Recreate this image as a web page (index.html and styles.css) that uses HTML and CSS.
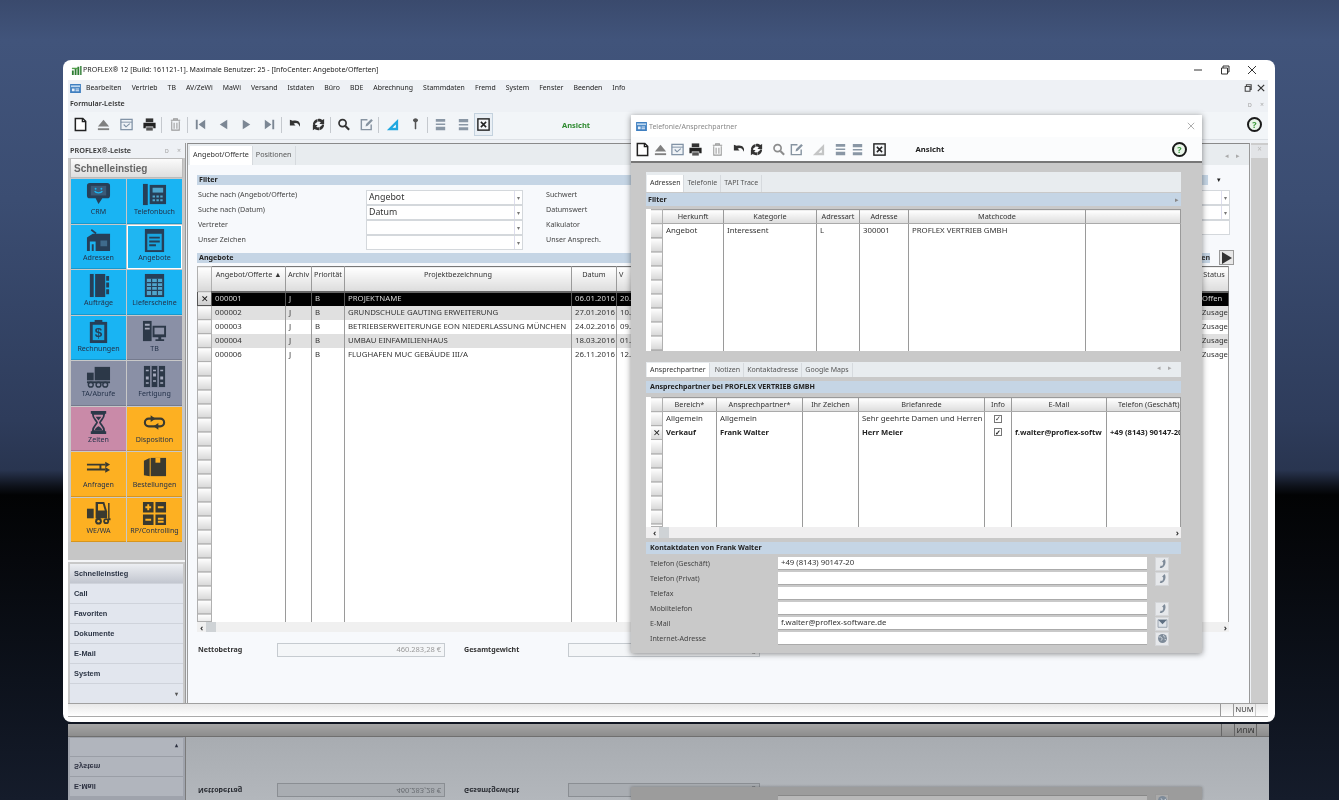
FILE: index.html
```html
<!DOCTYPE html>
<html lang="de">
<head>
<meta charset="utf-8">
<title>PROFLEX 12</title>
<link rel="stylesheet" href="styles.css">
</head>
<body>
<svg class="defs" width="0" height="0" aria-hidden="true">
  <defs>
    <symbol id="t-new" viewBox="0 0 16 16"><path d="M2.500 1.500h8l3 3v10h-11z" fill="#fff" stroke="#222" stroke-width="1.600"/><path d="M10 2v3h3.500" fill="none" stroke="#222" stroke-width="1.400"/></symbol>
    <symbol id="t-eject" viewBox="0 0 16 16"><path d="M8 3l6 7H2z" fill="#808080"/><path d="M2 12h12v2H2z" fill="#808080"/></symbol>
    <symbol id="t-check" viewBox="0 0 16 16"><rect x="2" y="2.500" width="12" height="11" fill="#eef2f6" stroke="#7d8fa3" stroke-width="1.300"/><path d="M2 5.500h12" stroke="#7d8fa3"/><path d="M5 8l2.500 2.500L11.500 7" fill="none" stroke="#7d8fa3" stroke-width="1.200"/></symbol>
    <symbol id="t-print" viewBox="0 0 16 16"><path d="M4 1.500h8v4H4z" fill="#333"/><path d="M1.500 6h13v6h-2.500v-2H4v2H1.500z" fill="#222"/><path d="M4.500 11h7v3.500h-7z" fill="#555"/></symbol>
    <symbol id="t-trash" viewBox="0 0 16 16"><path d="M3 3.500h10M6 3.500V2h4v1.500M4 4.500V14h8V4.500M6.500 6v6.500M9.500 6v6.500" fill="none" stroke="#999" stroke-width="1.100"/></symbol>
    <symbol id="t-first" viewBox="0 0 16 16"><path d="M3 3h2v10H3zM13 3v10L6 8z" fill="#7c8794"/></symbol>
    <symbol id="t-prev" viewBox="0 0 16 16"><path d="M12 3v10L4 8z" fill="#7c8794"/></symbol>
    <symbol id="t-next" viewBox="0 0 16 16"><path d="M4 3v10l8-5z" fill="#7c8794"/></symbol>
    <symbol id="t-last" viewBox="0 0 16 16"><path d="M11 3h2v10h-2zM3 3v10l7-5z" fill="#7c8794"/></symbol>
    <symbol id="t-undo" viewBox="0 0 16 16"><path d="M2 3v6h6L6 7c3-1.500 5.500-.2 6.500 3.500 1.500-4.500-1.500-8-7.500-6.500z" fill="#333"/></symbol>
    <symbol id="t-sync" viewBox="0 0 16 16"><path d="M2 8c0-3 2-5.500 5-6v3L4.500 7v2.500zM14 2v5.500h-5l1.500-2c-1-.5-2-.7-3-.5V2c1.800-.2 3.500.3 4.500 1.200z" fill="#333"/><path d="M2 14V8.500h5L5.500 10.500c1 .6 2 .7 3 .5v3c-1.800.2-3.500-.3-4.500-1.200zM14 8c0 3-2 5.500-5 6v-3l2.500-2V8z" fill="#333"/></symbol>
    <symbol id="t-search" viewBox="0 0 16 16"><circle cx="7" cy="6.500" r="3.800" fill="none" stroke="#333" stroke-width="1.800"/><path d="M10 9.500l4 4" stroke="#333" stroke-width="2.200"/></symbol>
    <symbol id="t-edit" viewBox="0 0 16 16"><path d="M13 8v5.500H2.500V3H9" fill="none" stroke="#8794a1" stroke-width="1.500"/><path d="M7 10l.5-2.500L13 2l1.800 1.800L9.300 9.300z" fill="#8794a1"/></symbol>
    <symbol id="t-ruler" viewBox="0 0 16 16"><path d="M14 2v12H2z" fill="#20a8e0"/><path d="M11.500 8v3.500H8z" fill="#fff"/></symbol>
    <symbol id="t-pin" viewBox="0 0 16 16"><circle cx="8" cy="3.500" r="2.300" fill="#555"/><path d="M5.500 2.500h5v2h-5z" fill="#555"/><path d="M7.200 5h1.600v7l-.8 1.500-.8-1.500z" fill="#555"/></symbol>
    <symbol id="t-up" viewBox="0 0 16 16"><path d="M3 2h10v3H3zM3 7h10v1.500H3zM3 10.500h10V14H3z" fill="#8a97a5"/></symbol>
    <symbol id="t-down" viewBox="0 0 16 16"><path d="M3 2h10v3.500H3zM3 7.500h10V9H3zM3 11h10v3H3z" fill="#8a97a5"/></symbol>
    <symbol id="t-close" viewBox="0 0 16 16"><rect x="2" y="2" width="12" height="12" fill="#f4f6f8" stroke="#222" stroke-width="1.500"/><path d="M5.200 5.200l5.600 5.600M10.800 5.200l-5.600 5.600" stroke="#222" stroke-width="1.600"/></symbol>
    <symbol id="phone" viewBox="0 0 16 16"><path d="M11 1.500c2 2.500 2 7-.5 10s-5 3.500-6.500 2.500l1.500-3 1.800.6c1.500-1.400 2-3.400 1.600-5.400L7.300 5.500z" fill="#7e8b99"/></symbol>
    <symbol id="mail" viewBox="0 0 16 16"><path d="M1.500 2.500h13v11h-13z" fill="#dfe4ea" stroke="#7e8b99"/><path d="M2 3l6 6 6-6z" fill="#5e6f82"/></symbol>
    <symbol id="globe" viewBox="0 0 16 16"><circle cx="8" cy="8" r="6.500" fill="#7e8b99"/><path d="M3 6c2-1 3 0 4 1s0 3-1 4M10 2.500c-1 2 0 3 2 3.500M11 9c1 0 2 .5 2 1.500" fill="none" stroke="#dfe4ea" stroke-width="1.300"/></symbol>

    <symbol id="i-crm" viewBox="0 0 26 26"><path d="M4 1h18a3 3 0 0 1 3 3v10a3 3 0 0 1-3 3h-5l-4 6-3-6H4a3 3 0 0 1-3-3V4a3 3 0 0 1 3-3z" fill="#263f58"/><path d="M5 4h16v10H5z" fill="#3a5a78"/><path d="M9 9.500c1.500 2.500 6.500 2.500 8 0" fill="none" stroke="#1cb4f0" stroke-width="1.400"/><circle cx="10" cy="7" r="1" fill="#1cb4f0"/><circle cx="16" cy="7" r="1" fill="#1cb4f0"/></symbol>
    <symbol id="i-phone" viewBox="0 0 26 26"><path d="M1 2h5v22H1z" fill="#263f58"/><path d="M8 3h17v20H8z" fill="#263f58"/><path d="M11 6h11v5H11z" fill="#4fa5cc"/><path d="M11 14h2.500v2H11zM15 14h2.500v2H15zM19 14h2.500v2H19zM11 18h2.500v2H11zM15 18h2.500v2H15zM19 18h2.500v2H19z" fill="#4fa5cc"/></symbol>
    <symbol id="i-addr" viewBox="0 0 26 26"><path d="M6 1l5 4-1 1.500-5-4z" fill="#263f58"/><path d="M1 10l6-4h18v18H1z" fill="#263f58"/><path d="M4 14h6v10H8v-7H6v7H4z" fill="#1cb4f0"/><path d="M15 13h7v6h-7z" fill="#3f6b8c"/></symbol>
    <symbol id="i-doc" viewBox="0 0 26 26"><path d="M3 1h20v24H3z" fill="#263f58"/><path d="M5.500 6h15v17h-15z" fill="#18a5df"/><path d="M7.500 9h11v2h-11zM7.500 13h11v2h-11zM7.500 17h7v2h-7z" fill="#263f58"/></symbol>
    <symbol id="i-book" viewBox="0 0 26 26"><path d="M4 1h16v24H4z" fill="#263f58"/><path d="M21 3h3v5h-3zM21 10h3v5h-3zM21 17h3v5h-3z" fill="#263f58"/><path d="M8 1h1.500v24H8z" fill="#1cb4f0"/></symbol>
    <symbol id="i-table" viewBox="0 0 26 26"><path d="M3 1h20v24H3z" fill="#263f58"/><path d="M5 6h16v17H5z" fill="#4fa5cc"/><path d="M5 10h16M5 14h16M5 18h16M10 6v17M16 6v17" stroke="#263f58" stroke-width="1.200"/></symbol>
    <symbol id="i-bill" viewBox="0 0 26 26"><path d="M4 3h18v22H4z" fill="#263f58"/><path d="M9 1h8v4H9z" fill="#263f58"/><path d="M7 6h12v16H7z" fill="#18a5df"/><text x="13" y="19" text-anchor="middle" font-family="Liberation Sans, sans-serif" font-size="14" font-weight="700" fill="#263f58">$</text></symbol>
    <symbol id="i-pc" viewBox="0 0 26 26"><path d="M1 2h9v21H1z" fill="#2c3848"/><path d="M3 5h5v2H3zM3 9h5v2H3z" fill="#a5aabd"/><path d="M11 7h14v12h-5v2h3v2h-9v-2h3v-2h-6z" fill="#2c3848"/><path d="M13 9h10v7H13z" fill="#8d93a8"/></symbol>
    <symbol id="i-truck" viewBox="0 0 26 26"><path d="M9 3h16v14H9z" fill="#2c3848"/><path d="M1 9h7v8H1z" fill="#2c3848"/><path d="M1 18h24v2H1z" fill="#2c3848"/><circle cx="5" cy="21.500" r="2.500" fill="none" stroke="#2c3848" stroke-width="1.500"/><circle cx="13" cy="21.500" r="2.500" fill="none" stroke="#2c3848" stroke-width="1.500"/><circle cx="20" cy="21.500" r="2.500" fill="none" stroke="#2c3848" stroke-width="1.500"/></symbol>
    <symbol id="i-panel" viewBox="0 0 26 26"><path d="M2 2h22v22H2z" fill="#2c3848"/><path d="M8.500 2h1.500v22H8.500zM16 2h1.500v22H16z" fill="#8d93a8"/><path d="M4 6h3v1.500H4zM11.500 6h3v1.500h-3zM19 6h3v1.500h-3zM4 13h3v3H4zM11.500 10h3v3h-3zM19 13h3v3h-3zM4 19h3v1.500H4zM11.500 17h3v1.500h-3zM19 19h3v1.500h-3z" fill="#a5aabd"/></symbol>
    <symbol id="i-hour" viewBox="0 0 26 26"><path d="M5 1h16v3H5zM5 22h16v3H5z" fill="#2c3848"/><path d="M7 4h12c0 5-4 7-4.500 9 .5 2 4.500 4 4.500 9H7c0-5 4-7 4.500-9C11 11 7 9 7 4z" fill="none" stroke="#2c3848" stroke-width="1.800"/><path d="M10 7h6l-3 4zM9 21c1-2.500 3-3.500 4-4 1 .5 3 1.500 4 4z" fill="#2c3848"/></symbol>
    <symbol id="i-loop" viewBox="0 0 26 26"><path d="M9 9h10a4 4 0 0 1 0 8h-2M17 17H7a4 4 0 0 1 0-8h2" fill="none" stroke="#3a3a30" stroke-width="2.200"/><path d="M9 5.500l5 3.500-5 3.500zM17 13.500L12 17l5 3.500z" fill="#3a3a30"/></symbol>
    <symbol id="i-shuffle" viewBox="0 0 26 26"><path d="M1 10h9M1 15h9M10 10h10M10 15h10M15 10v5" fill="none" stroke="#3a3a30" stroke-width="2"/><path d="M20 7l5 3-5 3zM20 12.500l5 3-5 3z" fill="#3a3a30"/></symbol>
    <symbol id="i-box" viewBox="0 0 26 26"><path d="M2 6l6-3v19l-6-1z" fill="#3a3a30"/><path d="M9 3h16v19H9z" fill="#3a3a30"/><path d="M14 3h5v5h-5z" fill="#fdb022"/></symbol>
    <symbol id="i-fork" viewBox="0 0 26 26"><path d="M1 8h7v10H1z" fill="#3a3a30"/><path d="M10 1h9l3 10v7H10z" fill="#3a3a30"/><path d="M12.500 3h5l2 7h-7z" fill="#fdb022"/><path d="M23 2h1.500v16h1v2H23z" fill="#3a3a30"/><circle cx="13" cy="21" r="3.500" fill="#3a3a30"/><circle cx="21" cy="21" r="3" fill="#3a3a30"/><circle cx="13" cy="21" r="1.300" fill="#fdb022"/><circle cx="21" cy="21" r="1.200" fill="#fdb022"/></symbol>
    <symbol id="i-calc" viewBox="0 0 26 26"><path d="M1 1h11v11H1zM14 1h11v11H14zM1 14h11v11H1zM14 14h11v11H14z" fill="#3a3a30"/><path d="M5.500 3.500h2v2h2v2h-2v2h-2v-2h-2v-2h2zM16.500 5.500h6v2h-6zM3.500 18.500h6v2h-6zM16.500 17.500h6v2h-6zM16.500 20.500h6v2h-6z" fill="#fdb022"/></symbol>
  </defs>
</svg>

<main class="app">
  <header class="titlebar">
    <svg class="logo" viewBox="0 0 12 12" width="11" height="11"><path d="M1 6h2v5H1zM4 4h2v7H4zM7 2h2v9H7zM10 1h1.500v10H10z" fill="#2e7d32"/><path d="M1 3h7v1.500H1z" fill="#55a04f"/></svg>
    <span class="title-text">PROFLEX® 12 [Build: 161121-1]. Maximale Benutzer: 25 - [InfoCenter: Angebote/Offerten]</span>
    <div class="win-controls">
      <svg width="10" height="10" viewBox="0 0 10 10"><path d="M1 5h8" stroke="#333"/></svg>
      <svg width="10" height="10" viewBox="0 0 10 10"><path d="M1.500 3h6v6h-6zM3 3V1h6v6H7.500" fill="none" stroke="#333"/></svg>
      <svg width="10" height="10" viewBox="0 0 10 10"><path d="M1 1l8 8M9 1l-8 8" stroke="#333"/></svg>
    </div>
  </header>

  <nav class="menubar">
    <svg class="menu-icon" viewBox="0 0 12 10" width="11" height="9"><rect width="12" height="10" fill="#3f7fc0"/><path d="M1 1.500h10v2H1z" fill="#bcd7f0"/><path d="M2 5h3v3H2zM6 5h4v1H6zM6 7h4v1H6z" fill="#e6f0fa"/></svg>
    <span>Bearbeiten</span><span>Vertrieb</span><span>TB</span><span>AV/ZeWi</span><span>MaWi</span><span>Versand</span><span>Istdaten</span><span>Büro</span><span>BDE</span><span>Abrechnung</span><span>Stammdaten</span><span>Fremd</span><span>System</span><span>Fenster</span><span>Beenden</span><span>Info</span>
    <div class="menu-right">
      <svg width="8" height="8" viewBox="0 0 10 10"><path d="M1.500 3h6v6h-6zM3 3V1h6v6H7.500" fill="none" stroke="#444" stroke-width="1.300"/></svg>
      <svg width="8" height="8" viewBox="0 0 10 10"><path d="M1 1l8 8M9 1l-8 8" stroke="#333" stroke-width="1.500"/></svg>
    </div>
  </nav>

  <div class="formbar">
    <strong>Formular-Leiste</strong>
    <div class="dock-btns"><span>ᴅ</span><span>×</span></div>
  </div>

  <div class="toolbar">
    <svg class="ti"><use href="#t-new"/></svg>
    <svg class="ti"><use href="#t-eject"/></svg>
    <svg class="ti"><use href="#t-check"/></svg>
    <svg class="ti"><use href="#t-print"/></svg>
    <i class="sep"></i>
    <svg class="ti"><use href="#t-trash"/></svg>
    <i class="sep"></i>
    <svg class="ti"><use href="#t-first"/></svg>
    <svg class="ti"><use href="#t-prev"/></svg>
    <svg class="ti"><use href="#t-next"/></svg>
    <svg class="ti"><use href="#t-last"/></svg>
    <i class="sep"></i>
    <svg class="ti"><use href="#t-undo"/></svg>
    <svg class="ti"><use href="#t-sync"/></svg>
    <i class="sep"></i>
    <svg class="ti"><use href="#t-search"/></svg>
    <svg class="ti"><use href="#t-edit"/></svg>
    <i class="sep"></i>
    <svg class="ti"><use href="#t-ruler"/></svg>
    <svg class="ti"><use href="#t-pin"/></svg>
    <i class="sep"></i>
    <svg class="ti"><use href="#t-up"/></svg>
    <svg class="ti"><use href="#t-down"/></svg>
    <span class="ti-boxed"><svg class="ti"><use href="#t-close"/></svg></span>
    <span class="ansicht-green">Ansicht</span>
    <span class="help help-main">?</span>
  </div>

  <div class="workspace">
    <aside class="sidebar">
      <div class="side-head"><strong>PROFLEX®-Leiste</strong><span class="dock-btns"><span>ᴅ</span><span>×</span></span></div>
      <div class="side-title">Schnelleinstieg</div>
      <div class="tiles">
        <a class="tile cyan"><svg><use href="#i-crm"/></svg><span>CRM</span></a>
        <a class="tile cyan"><svg><use href="#i-phone"/></svg><span>Telefonbuch</span></a>
        <a class="tile cyan"><svg><use href="#i-addr"/></svg><span>Adressen</span></a>
        <a class="tile cyan active"><svg><use href="#i-doc"/></svg><span>Angebote</span></a>
        <a class="tile cyan"><svg><use href="#i-book"/></svg><span>Aufträge</span></a>
        <a class="tile cyan"><svg><use href="#i-table"/></svg><span>Lieferscheine</span></a>
        <a class="tile cyan"><svg><use href="#i-bill"/></svg><span>Rechnungen</span></a>
        <a class="tile slate"><svg><use href="#i-pc"/></svg><span>TB</span></a>
        <a class="tile slate"><svg><use href="#i-truck"/></svg><span>TA/Abrufe</span></a>
        <a class="tile slate"><svg><use href="#i-panel"/></svg><span>Fertigung</span></a>
        <a class="tile pink"><svg><use href="#i-hour"/></svg><span>Zeiten</span></a>
        <a class="tile amber"><svg><use href="#i-loop"/></svg><span>Disposition</span></a>
        <a class="tile amber"><svg><use href="#i-shuffle"/></svg><span>Anfragen</span></a>
        <a class="tile amber"><svg><use href="#i-box"/></svg><span>Bestellungen</span></a>
        <a class="tile amber"><svg><use href="#i-fork"/></svg><span>WE/WA</span></a>
        <a class="tile amber"><svg><use href="#i-calc"/></svg><span>RP/Controlling</span></a>
      </div>
      <div class="side-spacer"></div>
      <ul class="side-nav">
        <li class="current">Schnelleinstieg</li>
        <li>Call</li>
        <li>Favoriten</li>
        <li>Dokumente</li>
        <li>E-Mail</li>
        <li>System</li>
        <li class="more">▾</li>
      </ul>
    </aside>

    <section class="main-panel">
      <div class="tabs">
        <span class="tab on">Angebot/Offerte</span><span class="tab">Positionen</span>
        <span class="tab-arrows"><span>◂</span><span>▸</span></span>
      </div>
      <div class="panel-body">
        <div class="band-row">
          <div class="band">Filter</div>
          <span class="band-caret">▾</span>
        </div>
        <div class="filter-grid">
          <label>Suche nach (Angebot/Offerte)</label>
          <div class="combo"><span>Angebot</span><b>▾</b></div>
          <label>Suchwert</label>
          <div class="combo"><span></span><b>▾</b></div>
          <label>Suche nach (Datum)</label>
          <div class="combo"><span>Datum</span><b>▾</b></div>
          <label>Datumswert</label>
          <div class="combo"><span></span><b>▾</b></div>
          <label>Vertreter</label>
          <div class="combo"><span></span><b>▾</b></div>
          <label>Kalkulator</label>
          <div class="combo plain"><span></span></div>
          <label>Unser Zeichen</label>
          <div class="combo"><span></span><b>▾</b></div>
          <label>Unser Ansprech.</label>
          <div></div>
        </div>
        <div class="band-row second">
          <div class="band">Angebote</div>
          <span class="band-action">Optionen</span>
          <span class="play"><svg viewBox="0 0 10 12" width="10" height="12"><path d="M0 0l10 6-10 6z" fill="#333"/></svg></span>
        </div>
        <table class="grid main-grid">
          <colgroup><col class="w14"><col class="w74"><col class="w26"><col class="w33"><col class="w227"><col class="w45"><col><col class="w29"></colgroup>
          <thead>
            <tr><th class="rh"></th><th>Angebot/Offerte ▲</th><th>Archiv</th><th>Priorität</th><th>Projektbezeichnung</th><th>Datum</th><th class="left">V</th><th>Status</th></tr>
          </thead>
          <tbody>
            <tr class="sel"><td class="rh">✕</td><td>000001</td><td>J</td><td>B</td><td>PROJEKTNAME</td><td>06.01.2016</td><td>20.</td><td class="st">Offen</td></tr>
            <tr class="alt"><td class="rh"></td><td>000002</td><td>J</td><td>B</td><td>GRUNDSCHULE GAUTING ERWEITERUNG</td><td>27.01.2016</td><td>10.</td><td class="st">Zusage</td></tr>
            <tr><td class="rh"></td><td>000003</td><td>J</td><td>B</td><td>BETRIEBSERWEITERUNGE EON NIEDERLASSUNG MÜNCHEN</td><td>24.02.2016</td><td>09.</td><td class="st">Zusage</td></tr>
            <tr class="alt"><td class="rh"></td><td>000004</td><td>J</td><td>B</td><td>UMBAU EINFAMILIENHAUS</td><td>18.03.2016</td><td>01.</td><td class="st">Zusage</td></tr>
            <tr><td class="rh"></td><td>000006</td><td>J</td><td>B</td><td>FLUGHAFEN MUC GEBÄUDE III/A</td><td>26.11.2016</td><td>12.</td><td class="st">Zusage</td></tr>
            <tr class="fill"><td class="rh"></td><td></td><td></td><td></td><td></td><td></td><td></td><td></td></tr>
          </tbody>
        </table>
        <div class="hscroll"><span>‹</span><i></i><span class="end">›</span></div>
        <div class="totals">
          <strong>Nettobetrag</strong>
          <output class="total-a">460.283,28 €</output>
          <strong class="total-label">Gesamtgewicht</strong>
          <output class="total-b">1.250,00 kg</output>
        </div>
      </div>
    </section>

    <aside class="right-rail"><div class="rail-tab">×</div></aside>
  </div>

  <footer class="statusbar"><span class="cell"></span><span class="cell num">NUM</span><span class="cell last"></span></footer>

  <section class="modal">
    <div class="m-title">
      <svg viewBox="0 0 12 10" width="11" height="9"><rect width="12" height="10" fill="#3f7fc0"/><path d="M1 1.500h10v2H1z" fill="#bcd7f0"/><path d="M2 5h3v3H2zM6 5h4v1H6zM6 7h4v1H6z" fill="#e6f0fa"/></svg>
      <span>Telefonie/Ansprechpartner</span>
      <svg class="m-x" viewBox="0 0 10 10" width="8" height="8"><path d="M1 1l8 8M9 1l-8 8" stroke="#aaa" stroke-width="1.200"/></svg>
    </div>
    <div class="m-toolbar">
      <svg class="ti"><use href="#t-new"/></svg>
      <svg class="ti"><use href="#t-eject"/></svg>
      <svg class="ti"><use href="#t-check"/></svg>
      <svg class="ti"><use href="#t-print"/></svg>
      <svg class="ti mt-gap"><use href="#t-trash"/></svg>
      <svg class="ti mt-gap"><use href="#t-undo"/></svg>
      <svg class="ti"><use href="#t-sync"/></svg>
      <svg class="ti mt-gap faded"><use href="#t-search"/></svg>
      <svg class="ti"><use href="#t-edit"/></svg>
      <svg class="ti mt-gap faded-ruler"><use href="#t-ruler"/></svg>
      <svg class="ti mt-gap"><use href="#t-up"/></svg>
      <svg class="ti"><use href="#t-down"/></svg>
      <svg class="ti mt-gap"><use href="#t-close"/></svg>
      <strong class="m-ansicht">Ansicht</strong>
      <span class="help help-modal">?</span>
    </div>
    <div class="m-body">
      <div class="tabs m-tabs">
        <span class="tab on">Adressen</span><span class="tab">Telefonie</span><span class="tab">TAPI Trace</span>
      </div>
      <div class="band m-band">Filter<span class="band-end">▸</span></div>
      <table class="grid upper-grid">
        <colgroup><col class="w14"><col class="w61"><col class="w93"><col class="w43"><col class="w49"><col class="w177"><col></colgroup>
        <thead>
          <tr><th class="rh"></th><th>Herkunft</th><th>Kategorie</th><th>Adressart</th><th>Adresse</th><th>Matchcode</th><th></th></tr>
        </thead>
        <tbody>
          <tr><td class="rh"></td><td>Angebot</td><td>Interessent</td><td>L</td><td>300001</td><td>PROFLEX VERTRIEB GMBH</td><td></td></tr>
          <tr class="fill"><td class="rh"></td><td></td><td></td><td></td><td></td><td></td><td></td></tr>
        </tbody>
      </table>
      <div class="tabs m-tabs lower">
        <span class="tab on">Ansprechpartner</span><span class="tab">Notizen</span><span class="tab">Kontaktadresse</span><span class="tab">Google Maps</span>
        <span class="tab-arrows"><span>◂</span><span>▸</span></span>
      </div>
      <div class="band m-band2">Ansprechpartner bei PROFLEX VERTRIEB GMBH</div>
      <table class="grid lower-grid">
        <colgroup><col class="w14"><col class="w54"><col class="w86"><col class="w56"><col class="w126"><col class="w27"><col class="w95"><col></colgroup>
        <thead>
          <tr><th class="rh"></th><th>Bereich*</th><th>Ansprechpartner*</th><th>Ihr Zeichen</th><th>Briefanrede</th><th>Info</th><th>E-Mail</th><th class="clipped">Telefon (Geschäft)</th></tr>
        </thead>
        <tbody>
          <tr><td class="rh"></td><td>Allgemein</td><td>Allgemein</td><td></td><td>Sehr geehrte Damen und Herren</td><td class="ctr"><span class="cb">✓</span></td><td></td><td></td></tr>
          <tr class="bold"><td class="rh">✕</td><td>Verkauf</td><td>Frank Walter</td><td></td><td>Herr Meier</td><td class="ctr"><span class="cb">✓</span></td><td>f.walter@proflex-softw</td><td>+49 (8143) 90147-20</td></tr>
          <tr class="fill"><td class="rh"></td><td></td><td></td><td></td><td></td><td></td><td></td><td></td></tr>
        </tbody>
      </table>
      <div class="hscroll m-scroll"><span>‹</span><i></i><span class="end">›</span></div>
      <div class="band m-band3">Kontaktdaten von Frank Walter</div>
      <div class="contact">
        <label>Telefon (Geschäft)</label><div class="field">+49 (8143) 90147-20</div><span class="act"><svg><use href="#phone"/></svg></span>
        <label>Telefon (Privat)</label><div class="field"></div><span class="act"><svg><use href="#phone"/></svg></span>
        <label>Telefax</label><div class="field"></div><span></span>
        <label>Mobiltelefon</label><div class="field"></div><span class="act"><svg><use href="#phone"/></svg></span>
        <label>E-Mail</label><div class="field">f.walter@proflex-software.de</div><span class="act"><svg><use href="#mail"/></svg></span>
        <label>Internet-Adresse</label><div class="field"></div><span class="act"><svg><use href="#globe"/></svg></span>
      </div>
    </div>
  </section>
</main>

<section class="reflection" aria-hidden="true">
  <div class="r-row">
    <div class="r-side"><div>E-Mail</div><div>System</div><div class="more">▾</div></div>
    <div class="r-main">
      <div class="totals">
        <strong>Nettobetrag</strong>
        <output class="total-a">460.283,28 €</output>
        <strong class="total-label">Gesamtgewicht</strong>
        <output class="total-b">1.250,00 kg</output>
      </div>
    </div>
  </div>
  <div class="r-status"><span class="cell"></span><span class="cell num">NUM</span><span class="cell last"></span></div>
  <div class="r-modal"><div class="field"></div><span class="act"><svg><use href="#globe"/></svg></span></div>
</section>
</body>
</html>
```

FILE: styles.css
```css
* { box-sizing: border-box; }
html, body { margin: 0; height: 100%; }
body {
  position: relative;
  width: 1339px;
  height: 800px;
  overflow: hidden;
  font: 7.100px/1 "Noto Sans", "Open Sans", sans-serif;
  color: #333;
  background:
    linear-gradient(to bottom,
      #3a4a6d 0, #41547b 40px, #3b4d72 200px, #2e3c5b 420px, #293550 470px,
      #0e121b 486px, #020304 495px, #06080c 560px, #0d121c 680px, #151c2b 800px);
}
.defs { position: absolute; }

/* Main application window */
.app {
  position: absolute;
  left: 63px;
  top: 60px;
  width: 1212px;
  height: 662px;
  display: flex;
  flex-direction: column;
  padding: 0 7px 5px 5px;
  background: #fff;
  border-radius: 8px;
  filter: blur(.25px);
}
.titlebar { height: 20px; display: flex; align-items: center; gap: 1px; flex: none; padding-left: 3px; }
.title-text { font-size: 7.050px; color: #222; white-space: nowrap; }
.win-controls { margin-left: auto; display: flex; gap: 17px; padding-right: 11px; }

.menubar { height: 16px; flex: none; display: flex; align-items: center; gap: 10px; padding-left: 2px; background: #eef1f5; color: #222; white-space: nowrap; font-size: 6.900px; }
.menu-icon { margin-right: -5px; }
.menu-right { margin-left: auto; display: flex; gap: 5px; padding-right: 3px; }

.formbar { height: 16px; flex: none; display: flex; align-items: center; padding-left: 2px; background: #eef1f5; }
.formbar strong { color: #333; font-weight: 600; }
.dock-btns { margin-left: auto; display: inline-flex; gap: 8px; color: #aaa; padding-right: 4px; font-size: 7px; }

.toolbar { height: 28px; flex: none; display: flex; align-items: center; padding: 0 0 2px 1px; background: #f2f5f8; border-bottom: 1px solid #dde1e6; }
.ti { width: 15px; height: 15px; margin: 0 4px; flex: none; }
.sep { width: 1px; height: 16px; background: #c5c9ce; margin-right: 1.500px; flex: none; }
.ti-boxed { display: flex; padding: 3px 0; margin-left: -1px; border: 1px solid #c4d2de; background: #e9eff5; }
.ti-boxed .ti { margin: 0 1px; }
.ansicht-green { margin-left: 69px; margin-top: 2px; font-weight: 700; color: #2f8a31; font-size: 7.500px; }
.help { display: flex; align-items: center; justify-content: center; width: 15px; height: 15px; border-radius: 50%; border: 2px solid #1a1a1a; font-weight: 700; color: #3a9a3a; font-size: 9px; background: #eaf5ea; }
.help-main { margin-left: auto; margin-right: 6px; }

.workspace { flex: 1; min-height: 0; display: flex; padding-top: 3px; background: #eef1f5; }

/* Left navigation */
.sidebar { width: 118px; flex: none; display: flex; flex-direction: column; background: #c8c8c8; border-right: 1px solid #999; }
.side-head { height: 15px; display: flex; align-items: center; padding-left: 2px; background: #eef1f5; font-size: 7.300px; }
.side-head strong { font-weight: 600; color: #333; }
.side-title { height: 20px; margin: 0 2px; display: flex; align-items: center; padding-left: 3px; background: linear-gradient(#fbfbfb, #dedede); border: 1px solid #bbb; font: 700 10px "Liberation Sans", sans-serif; color: #666; }
.tiles { display: grid; grid-template-columns: 55px 55px; grid-auto-rows: 44.500px; gap: 1px; margin: 1px 0 0 3px; }
.tile { display: flex; flex-direction: column; align-items: center; gap: 1px; padding-top: 3px; font-size: 7.100px; white-space: nowrap; box-shadow: inset 0 -1px 0 rgba(0,0,0,.15); }
.tile svg { width: 25px; height: 25px; }
.tile span { color: #24324a; }
.cyan { background: #19b4f3; }
.slate { background: #8a90a6; }
.pink { background: #c98aa8; }
.amber { background: #fdb022; }
.active { outline: 1px solid #fff; outline-offset: -1px; background: #1fb6f2; }
.side-spacer { flex: 1; border-bottom: 2px solid #f4f5f7; background: #c6c6c6; }
.side-nav { list-style: none; margin: 2px 2px 0; padding: 0; font: 700 7.400px "Liberation Sans", sans-serif; color: #2c3545; background: #e2e6ee; }
.side-nav li { height: 20px; display: flex; align-items: center; padding-left: 4px; border-bottom: 1px solid #cfd3db; }
.side-nav .current { background: linear-gradient(#eceef2, #c2c6cf); }
.side-nav .more { height: 19px; justify-content: flex-end; padding-right: 5px; color: #555; font-size: 6px; border-bottom: 0; }

/* Main panel */
.main-panel { flex: 1; min-width: 0; margin-left: 1px; display: flex; flex-direction: column; background: #f7f9fc; border-top: 1px solid #8a8a8a; border-left: 1px solid #999; border-right: 1px solid #999; }
.tabs { height: 21px; flex: none; display: flex; align-items: flex-end; padding-left: 2px; background: #e8ecef; color: #555; font-size: 7.200px; }
.tab { padding: 5px 3px 7px; white-space: nowrap; border-right: 1px solid #d6dade; }
.tab.on { background: #fff; color: #333; }
.tab-arrows { margin-left: auto; display: flex; gap: 7px; padding: 0 9px 6px 0; color: #aaa; }

.panel-body { flex: 1; padding: 10px 19px 0 9px; display: flex; flex-direction: column; min-height: 0; }
.band { height: 10px; display: flex; align-items: center; padding-left: 2px; background: #c5d5e5; font-weight: 700; color: #222; font-size: 7.100px; }
.band-row { display: flex; align-items: center; }
.band-row .band { flex: 1; }
.band-caret { width: 22px; text-align: center; color: #222; }
.band-row.second { height: 15px; }
.band-action { width: 0; direction: rtl; white-space: nowrap; font-weight: 700; margin-right: 9px; color: #333; }
.play { display: flex; align-items: center; justify-content: center; width: 15px; height: 15px; border: 1px solid #999; background: #e8e8e8; margin-right: -4px; }

.filter-grid { display: grid; grid-template-columns: 169px 157px 23px 1fr 29px; grid-auto-rows: 15px; margin-top: 5px; align-items: center; }
.filter-grid > :nth-child(4n+1) { grid-column: 1; padding-left: 1px; }
.filter-grid > :nth-child(4n+2) { grid-column: 2; }
.filter-grid > :nth-child(4n+3) { grid-column: 4; }
.filter-grid > :nth-child(4n) { grid-column: 5; }
.filter-grid label { align-self: start; padding-top: 1px; color: #444; }
.combo { height: 15px; display: flex; align-items: center; justify-content: space-between; background: #fff; border: 1px solid #d4d8dc; padding-left: 2px; font-size: 8.800px; }
.combo b { width: 8px; height: 100%; display: flex; align-items: center; justify-content: center; border-left: 1px solid #dde; color: #777; font-weight: 400; font-size: 6px; }

.grid { table-layout: fixed; border-collapse: collapse; background: #fff; flex: none; font-size: 7.800px; }
.grid th { font-weight: 400; color: #333; text-align: center; background: linear-gradient(#fff, #dcdcdc); border: 1px solid #9a9a9a; border-top: 0; padding: 0 2px; overflow: hidden; white-space: nowrap; font-size: 7.300px; }
.grid th.left { text-align: left; }
.grid th.clipped { text-align: left; padding-left: 11px; padding-right: 0; }
.grid td { height: 14px; padding: 0 3px; overflow: hidden; white-space: nowrap; border-left: 1px solid #9a9a9a; border-right: 1px solid #9a9a9a; color: #333; }
.grid td.st { padding: 0 0 0 2px; font-size: 7.600px; }
.grid .rh { padding: 0; text-align: center; background: linear-gradient(#fff, #d8d8d8); border: 1px solid #b0b0b0; }
.grid .fill td { height: auto; }
.grid .fill .rh { background: repeating-linear-gradient(#fff 0, #d8d8d8 13px, #999 13px, #999 14px); }
.grid .sel td { background: #000; color: #d8d8d8; border-color: #555; }
.grid .sel .rh { background: linear-gradient(#eee, #ccc); color: #111; font-size: 9px; }
.grid .alt td { background: #e0e0e0; }
.grid .alt .rh { background: linear-gradient(#fff, #d8d8d8); }
.grid .bold td { font-weight: 700; color: #222; font-size: 7.600px; }
.grid .bold .rh { font-weight: 400; font-size: 9px; }
.grid .ctr { text-align: center; }

.w14 { width: 14px; } .w26 { width: 26px; } .w27 { width: 27px; } .w29 { width: 29px; }
.w33 { width: 33px; } .w43 { width: 43px; } .w45 { width: 45px; } .w49 { width: 49px; } .w54 { width: 54px; }
.w56 { width: 56px; } .w61 { width: 61px; } .w74 { width: 74px; } .w86 { width: 86px; } .w93 { width: 93px; }
.w95 { width: 95px; } .w126 { width: 126px; } .w177 { width: 177px; } .w227 { width: 227px; }

.main-grid { width: 1032px; height: 356px; margin-top: 1px; border-top: 1px solid #777; border-left: 1px solid #888; }
.main-grid thead tr { height: 25px; }
.main-grid thead th { vertical-align: top; padding-top: 4px; border-bottom: 2px solid #666; }

.hscroll { height: 10px; width: 1032px; flex: none; display: flex; align-items: center; gap: 3px; padding-left: 3px; background: #f0f0f0; color: #333; font-size: 9px; font-weight: 700; }
.hscroll i { width: 10px; height: 10px; background: #cfd3d6; }
.hscroll .end { margin-left: auto; padding-right: 2px; }

.totals { display: flex; align-items: center; margin-top: 11px; height: 14px; }
.totals strong { width: 80px; padding-left: 1px; font-weight: 700; color: #333; }
.totals output { height: 14px; display: flex; align-items: center; justify-content: flex-end; padding-right: 3px; background: #f4f6f8; border: 1px solid #c6cbd0; color: #999; font-size: 7.500px; }
.total-a { width: 168px; }
.totals .total-label { width: 123px; padding-left: 19px; }
.total-b { width: 192px; }

.right-rail { width: 17px; flex: none; margin-left: 1px; background: #cccccc; }
.rail-tab { height: 13px; margin-top: 2px; background: #e2e4e7; color: #bbb; text-align: center; font-size: 8px; }

.statusbar { height: 14px; flex: none; display: flex; justify-content: flex-end; background: linear-gradient(#e8e8e8, #fff); border-top: 1px solid #a0a0a0; border-bottom: 1px solid #aaa; }
.cell { display: flex; align-items: center; justify-content: center; width: 13px; border-left: 1px solid #999; color: #333; font-size: 7.500px; }
.cell.num { width: 22px; }
.cell.last { border-left: 1px solid #ccc; }

/* Floating dialog */
.modal {
  position: absolute;
  left: 568px;
  top: 55px;
  width: 571px;
  height: 538px;
  display: flex;
  flex-direction: column;
  background: #c9c9c9;
  box-shadow: 0 1px 6px rgba(0,0,0,.45);
}
.m-title { height: 22px; flex: none; display: flex; align-items: center; gap: 2px; padding: 0 7px 0 5px; background: #fff; color: #888; font-size: 7px; }
.m-x { margin-left: auto; }
.m-toolbar { height: 26px; flex: none; display: flex; align-items: center; padding-left: 4px; background: #fbfcfd; border-bottom: 2px solid #777; }
.m-toolbar .ti { margin: 0 2.500px 0 0; }
.m-toolbar .mt-gap { margin-left: 4.500px; }
.faded { opacity: .55; }
.faded-ruler { filter: grayscale(1); opacity: .5; }
.m-ansicht { margin: 2px 0 0 26px; color: #222; font-size: 7.700px; }
.help-modal { margin-left: auto; margin-right: 15px; }

.m-body { flex: 1; min-height: 0; display: flex; flex-direction: column; padding: 9px 21px 0 15px; }
.m-tabs { height: 20px; padding-left: 1px; font-size: 7px; }
.m-tabs .tab { padding: 4px 3px 6px; }
.m-tabs.lower { height: 15px; margin-top: 11px; }
.m-tabs.lower .tab { padding: 3px 3px 4px; }
.m-tabs.lower .tab:nth-child(2) { margin-left: 2px; }
.m-band { height: 13px; margin-top: 1px; position: relative; }
.band-end { position: absolute; right: 2px; top: 3px; color: #888; font-weight: 400; }
.m-band2 { height: 12px; margin-top: 4px; padding-left: 4px; }
.m-band3 { height: 12px; margin-top: 4px; padding-left: 4px; }

.upper-grid { width: 535px; height: 142px; margin-top: 3px; border-left: 5px solid #fff; border-top: 1px solid #999; }
.upper-grid thead tr, .lower-grid thead tr { height: 14px; }
.upper-grid thead th, .lower-grid thead th { border-bottom: 1px solid #aaa; }
.lower-grid { width: 535px; height: 130px; margin-top: 4px; border-left: 5px solid #fff; border-top: 1px solid #999; }
.cb { display: inline-flex; align-items: center; justify-content: center; width: 8px; height: 8px; border: 1px solid #777; font-size: 7px; line-height: 1; }
.m-scroll { width: 535px; height: 11px; background: #f0eff0; padding-left: 7px; }
.m-scroll i { height: 11px; }

.contact { display: grid; grid-template-columns: 132px 369px 8px 14px; grid-auto-rows: 15px; margin-top: 2px; align-items: center; color: #444; }
.contact label { padding-left: 4px; grid-column: 1; }
.field { height: 13px; display: flex; align-items: center; padding-left: 3px; background: #fff; border-bottom: 1px solid #aaa; font-size: 7.750px; color: #333; }
.contact > .field { grid-column: 2; }
.contact > span { grid-column: 4; }
.act { display: flex; align-items: center; justify-content: center; width: 14px; height: 14px; background: #e6e8eb; border: 1px solid #d4d6d9; }
.act svg { width: 11px; height: 11px; }

/* Mirrored floor reflection */
.reflection {
  position: absolute;
  left: 68px;
  top: 724px;
  width: 1201px;
  height: 76px;
  overflow: hidden;
  display: flex;
  flex-direction: column;
  justify-content: flex-end;
  transform: scaleY(-1);
  background: #aeb2b7;
  color: #2b2f35;
  filter: blur(.25px);
}
.r-row { height: 63px; flex: none; display: flex; }
.r-side { width: 118px; display: flex; flex-direction: column; justify-content: flex-end; padding: 0 2px; background: #9fa3ac; border-right: 1px solid #7a7a7a; font: 700 7.400px "Liberation Sans", sans-serif; color: #2c3040; }
.r-side div { height: 20px; display: flex; align-items: center; padding-left: 4px; background: #b1b5bd; border-bottom: 1px solid #9a9ea6; }
.r-side .more { height: 19px; justify-content: flex-end; padding-right: 5px; font-size: 6px; }
.r-main { flex: 1; padding: 3px 0 0 11px; background: linear-gradient(to bottom, #b3b7bc, #a8acb1); }
.r-main .totals { margin-top: 0; }
.r-main .totals output { background: #a9adb2; border-color: #8a8e93; color: #6a6e73; }
.r-main .totals strong { color: #2a2d33; }
.r-status { height: 13px; flex: none; display: flex; justify-content: flex-end; background: linear-gradient(#8d8d8d, #a5a5a5); border-top: 1px solid #6f6f6f; color: #2a2a2a; }
.r-status .cell { border-left-color: #666; color: #2a2a2a; }
.r-modal { position: absolute; left: 563px; top: 0; width: 571px; height: 13px; display: grid; grid-template-columns: 147px 369px 8px 14px; grid-auto-rows: 15px; background: #9c9c9c; box-shadow: 0 0 3px rgba(0,0,0,.3); overflow: hidden; }
.r-modal .field { grid-column: 2; margin-top: -8px; background: #b8b8b8; border-color: #888; }
.r-modal .act { grid-column: 4; margin-top: -8px; background: #aaa; border-color: #999; }
```
